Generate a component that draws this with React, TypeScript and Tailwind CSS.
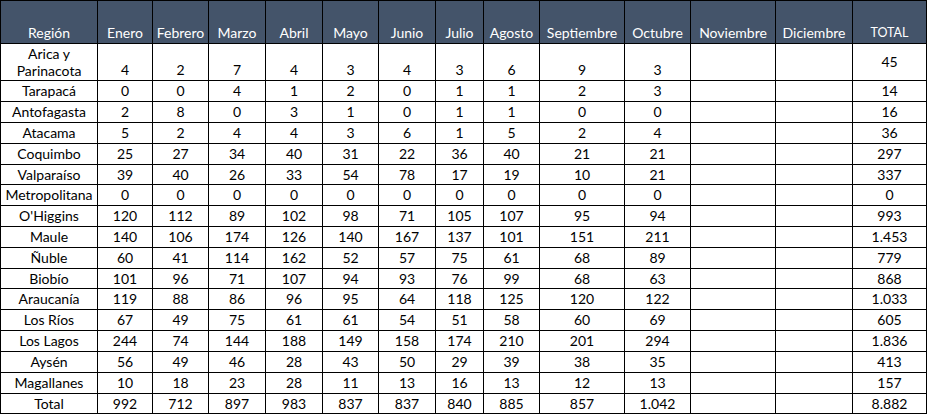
import React from "react";

const months = ["Enero","Febrero","Marzo","Abril","Mayo","Junio","Julio","Agosto","Septiembre","Octubre","Noviembre","Diciembre"];

const rows: [string, string[], string][] = [
  ["Tarapacá", ["0","0","4","1","2","0","1","1","2","3","",""], "14"],
  ["Antofagasta", ["2","8","0","3","1","0","1","1","0","0","",""], "16"],
  ["Atacama", ["5","2","4","4","3","6","1","5","2","4","",""], "36"],
  ["Coquimbo", ["25","27","34","40","31","22","36","40","21","21","",""], "297"],
  ["Valparaíso", ["39","40","26","33","54","78","17","19","10","21","",""], "337"],
  ["Metropolitana", ["0","0","0","0","0","0","0","0","0","0","",""], "0"],
  ["O'Higgins", ["120","112","89","102","98","71","105","107","95","94","",""], "993"],
  ["Maule", ["140","106","174","126","140","167","137","101","151","211","",""], "1.453"],
  ["Ñuble", ["60","41","114","162","52","57","75","61","68","89","",""], "779"],
  ["Biobío", ["101","96","71","107","94","93","76","99","68","63","",""], "868"],
  ["Araucanía", ["119","88","86","96","95","64","118","125","120","122","",""], "1.033"],
  ["Los Ríos", ["67","49","75","61","61","54","51","58","60","69","",""], "605"],
  ["Los Lagos", ["244","74","144","188","149","158","174","210","201","294","",""], "1.836"],
  ["Aysén", ["56","49","46","28","43","50","29","39","38","35","",""], "413"],
  ["Magallanes", ["10","18","23","28","11","13","16","13","12","13","",""], "157"],
  ["Total", ["992","712","897","983","837","837","840","885","857","1.042","",""], "8.882"],
];

const arica = ["4","2","7","4","3","4","3","6","9","3","",""];

export default function App() {
  return (
    <div
      className="w-[927px] h-[414px] bg-black p-px grid gap-px grid-cols-[96px_54px_55px_56px_56px_55px_56px_47px_55px_84px_65px_84px_76px_73px] grid-rows-[42px_36px_20px_20px_20px_20px_19px_20px_20px_20px_20px_19px_20px_20px_20px_20px_20px_19px] text-[14px] leading-[18px] text-black"
      style={{ fontFamily: "Lato, 'Open Sans', sans-serif" }}
    >
      <div className="bg-[#44546a] text-white flex items-end justify-center pb-[1px]">Región</div>
      {months.map((m) => (
        <div key={m} className="bg-[#44546a] text-white flex items-end justify-center pb-[1px] whitespace-nowrap">{m}</div>
      ))}
      <div className="bg-[#44546a] text-white flex items-end justify-center pb-[1px] text-[12.5px]">TOTAL</div>

      <div className="bg-white flex flex-col items-center justify-end text-center leading-[17px] pb-[1px]">
        <span>Arica y</span>
        <span>Parinacota</span>
      </div>
      {arica.map((v, i) => (
        <div key={i} className="bg-white flex items-end justify-center pb-[1px]">{v}</div>
      ))}
      <div className="bg-white flex items-center justify-center">45</div>

      {rows.map(([name, vals, total]) => (
        <React.Fragment key={name}>
          <div className="bg-white flex items-center justify-center whitespace-nowrap">{name}</div>
          {vals.map((v, i) => (
            <div key={i} className="bg-white flex items-center justify-center">{v}</div>
          ))}
          <div className="bg-white flex items-center justify-center">{total}</div>
        </React.Fragment>
      ))}
    </div>
  );
}
